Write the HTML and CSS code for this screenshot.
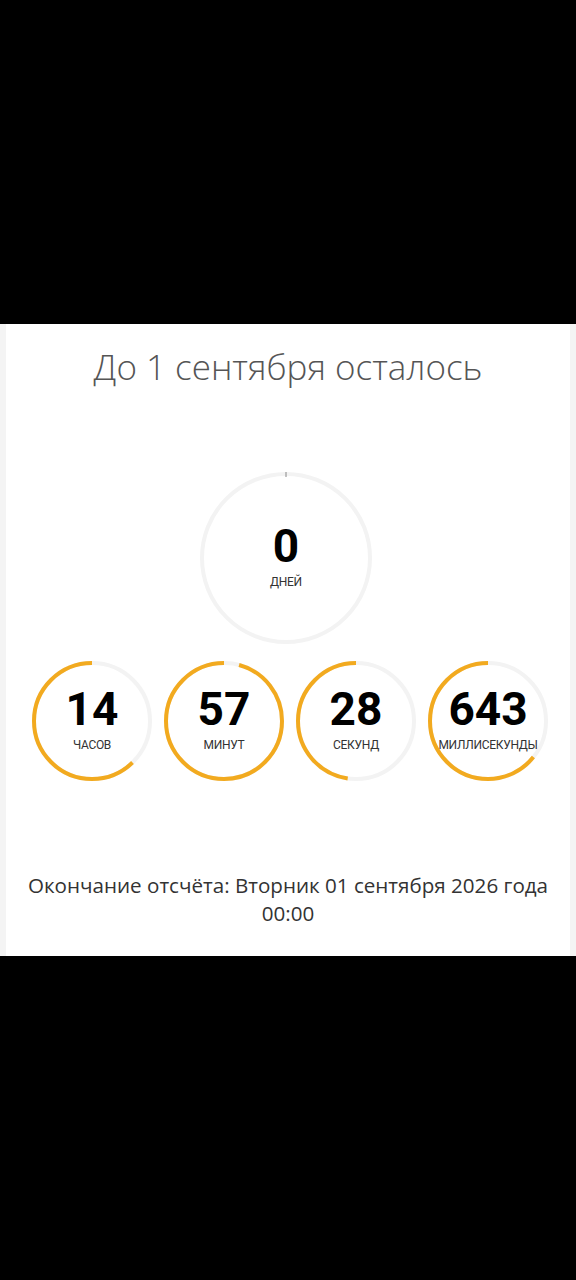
FILE: index.html
```html
<!DOCTYPE html>
<html>
<head>
  <meta charset="utf-8">
  <title>До 1 сентября</title>
  <link rel="stylesheet" href="styles.css">
</head>
<body>

  <div class="panel">
    <h1 class="title">До 1 сентября осталось</h1>

    <div class="ring ring-big">
      <svg width="172" height="172" viewBox="0 0 172 172">
        <circle class="track" cx="86" cy="86" r="84"></circle>
        <line class="tick" x1="86" y1="0" x2="86" y2="5"></line>
      </svg>
      <div class="ring-text">
        <span class="num">0</span>
        <span class="unit">дней</span>
      </div>
    </div>

    <div class="row">
      <div class="ring">
        <svg width="120" height="120" viewBox="0 0 120 120">
          <circle class="track" cx="60" cy="60" r="58"></circle>
          <circle class="bar" cx="60" cy="60" r="58" pathLength="100" transform="translate(120 0) scale(-1 1) rotate(-90 60 60)" style="stroke-dasharray: 62.3 100"></circle>
        </svg>
        <div class="ring-text">
          <span class="num">14</span>
          <span class="unit">часов</span>
        </div>
      </div>
      <div class="ring">
        <svg width="120" height="120" viewBox="0 0 120 120">
          <circle class="track" cx="60" cy="60" r="58"></circle>
          <circle class="bar" cx="60" cy="60" r="58" pathLength="100" transform="translate(120 0) scale(-1 1) rotate(-90 60 60)" style="stroke-dasharray: 95.8 100"></circle>
        </svg>
        <div class="ring-text">
          <span class="num">57</span>
          <span class="unit">минут</span>
        </div>
      </div>
      <div class="ring">
        <svg width="120" height="120" viewBox="0 0 120 120">
          <circle class="track" cx="60" cy="60" r="58"></circle>
          <circle class="bar" cx="60" cy="60" r="58" pathLength="100" transform="translate(120 0) scale(-1 1) rotate(-90 60 60)" style="stroke-dasharray: 47.7 100"></circle>
        </svg>
        <div class="ring-text">
          <span class="num">28</span>
          <span class="unit">секунд</span>
        </div>
      </div>
      <div class="ring">
        <svg width="120" height="120" viewBox="0 0 120 120">
          <circle class="track" cx="60" cy="60" r="58"></circle>
          <circle class="bar" cx="60" cy="60" r="58" pathLength="100" transform="translate(120 0) scale(-1 1) rotate(-90 60 60)" style="stroke-dasharray: 64.3 100"></circle>
        </svg>
        <div class="ring-text">
          <span class="num">643</span>
          <span class="unit">миллисекунды</span>
        </div>
      </div>
    </div>

    <p class="end">Окончание отсчёта: Вторник 01 сентября 2026 года 00:00</p>
  </div>

</body>
</html>
```

FILE: styles.css
```css
body {
  margin: 0;
  background: #000;
  font-family: "Open Sans", Arial, sans-serif;
}

.panel {
  margin-top: 324px;
  height: 632px;
  box-sizing: border-box;
  background: #fff;
  border-left: 6px solid #f4f4f4;
  border-right: 6px solid #f4f4f4;
  padding-top: 20px;
  display: flex;
  flex-direction: column;
  align-items: center;
}

.title {
  margin: 0 0 83px;
  font-size: 35px;
  line-height: 45px;
  font-weight: 300;
  color: #555;
}

.ring {
  position: relative;
  width: 120px;
  height: 120px;
}

.ring-big {
  width: 172px;
  height: 172px;
  margin-right: 4px;
}

.ring svg {
  display: block;
}

.track,
.bar {
  fill: none;
  stroke-width: 4;
}

.track {
  stroke: #f3f3f3;
}

.bar {
  stroke: #f2aa1f;
}

.tick {
  stroke: #888;
  stroke-width: 1;
}

.ring-text {
  position: absolute;
  inset: 0;
  display: flex;
  flex-direction: column;
  align-items: center;
  justify-content: center;
  font-family: Roboto, Arial, sans-serif;
  padding-bottom: 6px;
}

.num {
  font-size: 46px;
  line-height: 50px;
  font-weight: 700;
  color: #000;
  margin-bottom: 4px;
}

.unit {
  font-size: 12px;
  line-height: 14px;
  text-transform: uppercase;
  color: #333;
  letter-spacing: -0.3px;
}

.row {
  display: flex;
  gap: 12px;
  margin-top: 17px;
  margin-left: 4px;
}

.end {
  margin: 90px 0 0;
  width: 540px;
  text-align: center;
  font-size: 20.6px;
  line-height: 28px;
  color: #333;
}
```
